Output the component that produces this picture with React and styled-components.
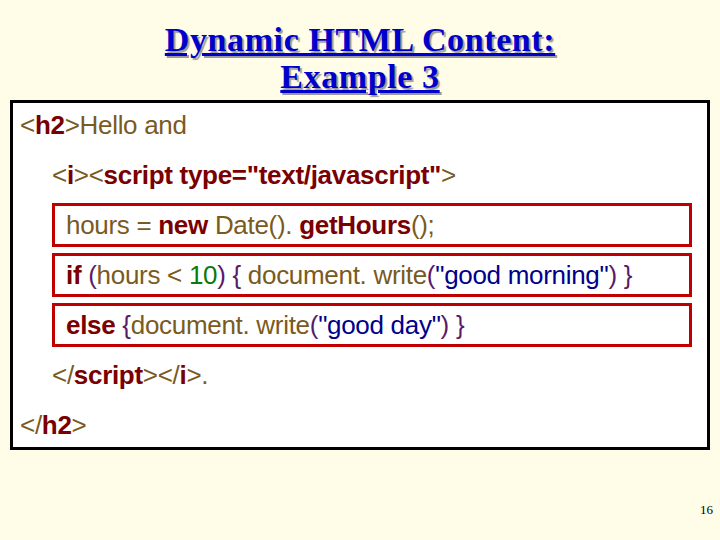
import React from "react";
import styled, { createGlobalStyle } from "styled-components";

const Global = createGlobalStyle`
  html, body { margin: 0; padding: 0; background: #fffde7; }
  body { width: 720px; height: 540px; overflow: hidden; }
`;

const Page = styled.div`
  width: 720px; height: 540px; box-sizing: border-box;
  padding: 21px 10px 0; position: relative;
  background: #fffde7;
`;

const Title = styled.h1`
  margin: 0; text-align: center;
  font: bold 34px/37px "Liberation Serif", serif;
  letter-spacing: 0.6px;
  color: #0000cc; text-decoration: underline;
  text-shadow: 2px 2px 1px #9a9a9a;
`;

const CodeBox = styled.div`
  margin-top: 5px; background: #fff; border: 3px solid #000;
  height: 350px; box-sizing: border-box; padding: 0 7px;
  display: flex; flex-direction: column; gap: 6px;
  font: 26px "Liberation Sans", Arial, sans-serif; color: #7a5a1e;
  letter-spacing: -0.3px;
`;

const Line = styled.div`
  height: 44px; line-height: 44px; white-space: nowrap; box-sizing: border-box;
  margin-left: ${p => (p.$indent ? "32px" : "0")};
  ${p => p.$boxed && `
    border: 3px solid #c00000; line-height: 38px;
    padding-left: 11px; margin-right: 8px;
  `}
`;

const K = styled.b`color: #7a0000;`;
const N = styled.span`color: #0a7a0a;`;
const S = styled.span`color: #00008b;`;
const P = styled.span`color: #5a1a6a;`;

const PageNum = styled.div`
  position: absolute; right: 7px; bottom: 22px;
  font: 13px "Liberation Serif", serif; color: #000;
`;

export default function App() {
  return (
    <Page>
      <Global />
      <Title>Dynamic HTML Content:<br />Example 3</Title>
      <CodeBox>
        <Line>&lt;<K>h2</K>&gt;Hello and</Line>
        <Line $indent>&lt;<K>i</K>&gt;&lt;<K>script type="text/javascript"</K>&gt;</Line>
        <Line $indent $boxed>hours = <K>new</K> Date(). <K>get</K><K>Hours</K>();</Line>
        <Line $indent $boxed><K>if</K> <P>(</P>hours &lt; <N>10</N><P>)</P> <P>{"{"}</P> document. write<P>(</P><S>"good morning"</S><P>)</P> <P>{"}"}</P></Line>
        <Line $indent $boxed><K>else</K> <P>{"{"}</P>document. write<P>(</P><S>"good day"</S><P>)</P> <P>{"}"}</P></Line>
        <Line $indent>&lt;/<K>script</K>&gt;&lt;/<K>i</K>&gt;.</Line>
        <Line>&lt;/<K>h2</K>&gt;</Line>
      </CodeBox>
      <PageNum>16</PageNum>
    </Page>
  );
}
